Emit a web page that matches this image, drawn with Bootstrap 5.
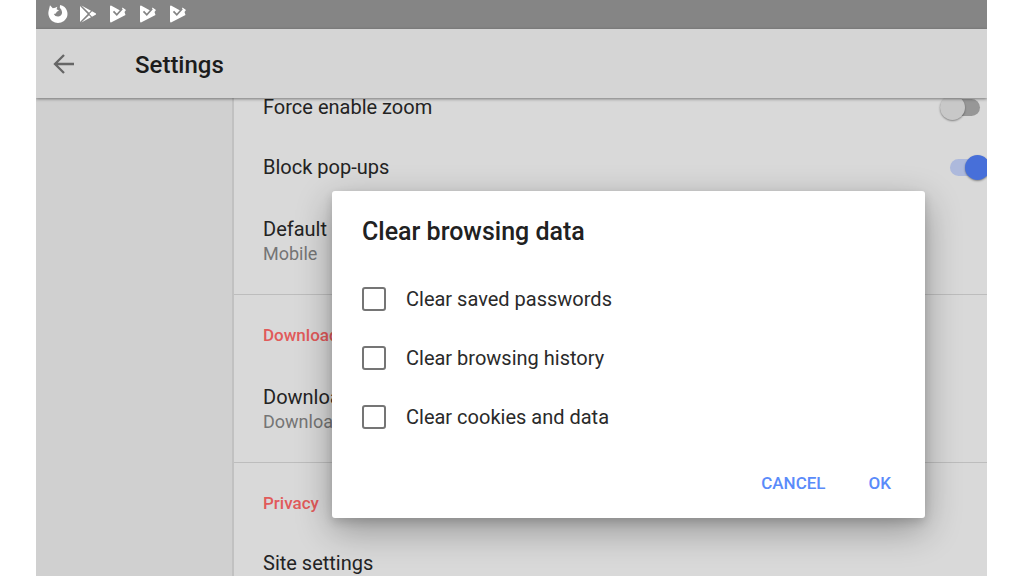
<!DOCTYPE html>
<html lang="en">
<head>
<meta charset="utf-8">
<meta name="viewport" content="width=device-width, initial-scale=1">
<title>Settings</title>
<link href="https://cdn.jsdelivr.net/npm/bootstrap@5.3.0/dist/css/bootstrap.min.css" rel="stylesheet">
<style>
  body { font-family: Roboto, "Noto Sans", sans-serif; font-size: 20px; line-height: 24px; color: #232323; background: #fff; }
  .stage { padding: 0 37px 0 36px; }
  .device { background: #d9d9d9; }
  .status-bar { height: 29px; background: #858585; padding: 0 0 1px 12px; gap: 10px; }
  .app-bar { height: 69px; background: #d5d5d5; box-shadow: 0 1px 3px rgba(0,0,0,.45); padding-left: 16px; z-index: 1; }
  .app-bar h1 { font-size: 24px; line-height: 30px; font-weight: 500; margin: 2px 0 0 59px; color: #1c1c1c; }
  .list-area { min-height: 0; }
  .side-pane { width: 198px; background: #d0d0d0; border-right: 2px solid #c1c1c1; }
  /* the list is scrolled partly beneath the app bar */
  .scrolled { margin-top: -21px; }
  .group { padding: 10px 0 7px; border-bottom: 1px solid #bdbdbd; }
  .group:first-child { padding-top: 0; }
  .group:last-child { border-bottom: 0; }
  .item { height: 60px; padding-left: 29px; }
  .item label { line-height: 18px; }
  .item-tall { height: 90px; }
  .group-title { font-size: 17px; font-weight: 500; color: #e15a5a; margin: 0; }
  .note { font-size: 18px; line-height: 26px; color: #757575; }
  .toggle { appearance: none; position: relative; width: 50px; height: 25px; margin: 0 -3px 0 auto; }
  .toggle::before, .toggle::after { content: ""; position: absolute; }
  .toggle::before { left: 0; top: 4px; width: 40px; height: 17px; border-radius: 9px; background: #979797; }
  .toggle::after { left: 0; top: 0; width: 25px; height: 25px; border-radius: 50%; background: #c8c8c8; box-shadow: 0 1px 2px rgba(0,0,0,.4); }
  .toggle:checked::before { left: 10px; background: #adb9dc; }
  .toggle:checked::after { left: 25px; background: #476fd9; }
  .prompt { top: 191px; left: 296px; right: 62px; border-radius: 3px; padding: 26px 22px 17px 30px; background: #fff; z-index: 2;
            box-shadow: 0 12px 36px rgba(0,0,0,.32), 0 4px 10px rgba(0,0,0,.14); }
  .prompt h2 { font-size: 25px; line-height: 30px; font-weight: 500; margin: 0 0 22px; color: #212121; }
  .choice { height: 59px; gap: 20px; }
  .choice input { appearance: none; width: 24px; height: 24px; margin: 0; border: 2px solid #757575; border-radius: 3px; }
  .choice input:checked { background: #5c8dfb; }
  .choice label { color: #2a2a2a; }
  .actions { margin-top: 19px; gap: 19px; }
  .actions .btn { font-size: 17px; line-height: 24px; font-weight: 500; color: #5a8bfa; padding: 6px 12px; border: 0; }
</style>
</head>
<body>
<svg class="d-none" aria-hidden="true">
  <symbol id="play-check" viewBox="0 0 20 20">
    <path fill="#fff" d="M3 1.500 8.500 4.500 13 7 14.500 3.500 18 6 16.500 8 17.500 11 3 18.500Q2 18.500 2 17V2.500Q2 1.500 3 1.500Z"/>
    <path d="m5.500 7.300 3.300 3.500 5.400-6" fill="none" stroke="#858585" stroke-width="1.700"/>
  </symbol>
</svg>
<div class="stage vh-100 d-flex">
  <div class="device position-relative flex-grow-1 d-flex flex-column overflow-hidden">
    <div class="status-bar d-flex align-items-center flex-shrink-0">
      <svg width="20" height="20" viewBox="0 0 20 20" aria-hidden="true"><path fill="#fff" d="M2 1.300 4.800 4.200 7.200 3.800 9.300 2.800 8.600 5.200 11 6.500 8.800 7.800 7.800 9.500 5.800 10Q7 12.800 10.500 12.500Q14.300 11.500 14 8Q13.800 5.500 11.800 3.700L12 .9Q17.500 2 19 7Q20.800 13 16 17Q10 21 4 17Q-.8 12.500 .7 6.500Z"/></svg>
      <svg width="20" height="20" viewBox="0 0 20 20" aria-hidden="true"><path fill="#fff" d="M2 2v16l7.700-8zM3.400 1.500 11 8.800l2-2zM3.400 18.500 11 11.200l2 2zM14 7.300 11.400 10 14 12.700 18 10.500V9.500z"/></svg>
      <svg width="20" height="20" aria-hidden="true"><use href="#play-check"/></svg>
      <svg width="20" height="20" aria-hidden="true"><use href="#play-check"/></svg>
      <svg width="20" height="20" aria-hidden="true"><use href="#play-check"/></svg>
    </div>
    <header class="app-bar d-flex align-items-center flex-shrink-0 position-relative">
      <button type="button" class="btn p-0 border-0 d-flex" aria-label="Back">
        <svg width="24" height="24" viewBox="0 0 24 24" fill="none" stroke="#666" stroke-width="2.300" aria-hidden="true"><path d="M22 12H4M12 3l-9 9 9 9"/></svg>
      </button>
      <h1>Settings</h1>
    </header>
    <main class="list-area d-flex flex-grow-1">
      <div class="side-pane flex-shrink-0"></div>
      <div class="scrolled flex-grow-1">
        <section class="group">
          <div class="item d-flex align-items-center"><label for="zoom">Force enable zoom</label><input class="toggle" type="checkbox" role="switch" id="zoom"></div>
          <div class="item d-flex align-items-center"><label for="popups">Block pop-ups</label><input class="toggle" type="checkbox" role="switch" id="popups" checked></div>
          <div class="item item-tall d-flex flex-column justify-content-center"><div>Default</div><div class="note">Mobile</div></div>
        </section>
        <section class="group">
          <h2 class="item group-title d-flex align-items-center">Downloads</h2>
          <div class="item item-tall d-flex flex-column justify-content-center"><div>Downloads</div><div class="note">Download</div></div>
        </section>
        <section class="group">
          <h2 class="item group-title d-flex align-items-center">Privacy</h2>
          <div class="item d-flex align-items-center">Site settings</div>
        </section>
      </div>
    </main>
    <form class="prompt position-absolute" role="dialog" aria-labelledby="promptTitle">
      <h2 id="promptTitle">Clear browsing data</h2>
      <div class="choice d-flex align-items-center"><input type="checkbox" id="passwords"><label for="passwords">Clear saved passwords</label></div>
      <div class="choice d-flex align-items-center"><input type="checkbox" id="history"><label for="history">Clear browsing history</label></div>
      <div class="choice d-flex align-items-center"><input type="checkbox" id="cookies"><label for="cookies">Clear cookies and data</label></div>
      <div class="actions d-flex justify-content-end">
        <button type="button" class="btn">CANCEL</button>
        <button type="button" class="btn">OK</button>
      </div>
    </form>
  </div>
</div>
<script src="https://cdn.jsdelivr.net/npm/bootstrap@5.3.0/dist/js/bootstrap.bundle.min.js"></script>
</body>
</html>
